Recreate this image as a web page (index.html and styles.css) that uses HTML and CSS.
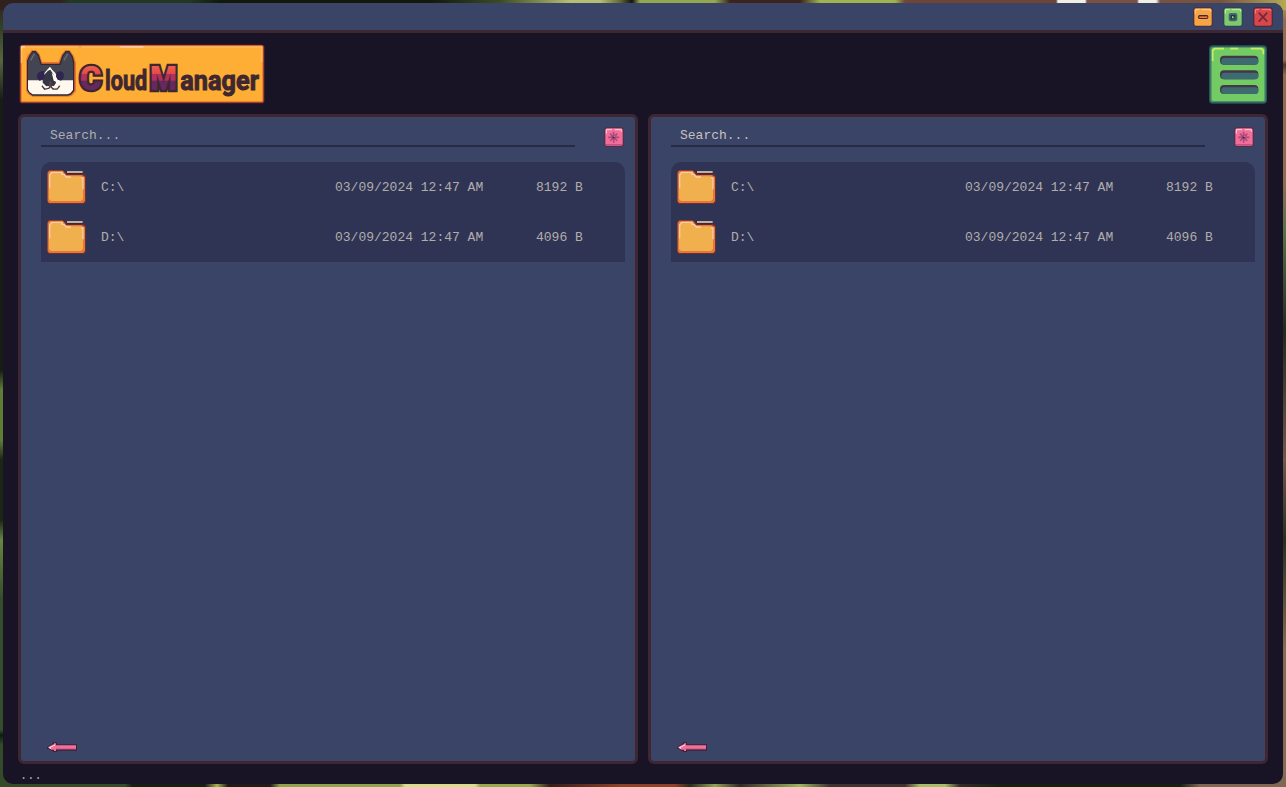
FILE: index.html
```html
<!DOCTYPE html>
<html lang="en">
<head>
<meta charset="utf-8">
<title>CloudManager</title>
<link rel="stylesheet" href="styles.css">
</head>
<body>
<svg class="defs" width="0" height="0" aria-hidden="true">
  <defs>
    <linearGradient id="letter" gradientUnits="userSpaceOnUse" x1="0" y1="82" x2="0" y2="155">
      <stop offset="0" stop-color="#f0614b"/><stop offset=".36" stop-color="#e4484b"/>
      <stop offset=".37" stop-color="#b4305c"/><stop offset=".62" stop-color="#b4305c"/>
      <stop offset=".63" stop-color="#66285f"/><stop offset="1" stop-color="#66285f"/>
    </linearGradient>
    <symbol id="folder" viewBox="0 0 117 102">
      <path d="M6 0H45L54 6H105V12H111L117 18V96L111 102H6L0 96V6Z" fill="#6a3034"/>
      <path d="M54 3H107V13H62Z" fill="#3e2731"/>
      <path d="M6 2H48L57 15H105L114 21V93L109 99H6L2 93V9Z" fill="#e87638"/>
      <path d="M12 6H45L57 19H102L108 25V87L102 93H12L6 87V13Z" fill="#f0b04e"/>
      <path d="M8 55V15L14 7H45V13H51L58 21H72M102 24H108V58" fill="none" stroke="#f8cfaa" stroke-width="4"/>
      <path d="M60 6H107" stroke="#f2dccb" stroke-width="4"/>
    </symbol>
    <symbol id="star" viewBox="0 0 60 60">
      <rect x="1" y="1" width="58" height="58" rx="8" fill="#5a2944"/>
      <rect x="4" y="4" width="52" height="52" rx="5" fill="#f0709a"/>
      <path d="M5 53H55" stroke="#c95080" stroke-width="4"/>
      <path d="M7 20V8H24M32 8H52V14" fill="none" stroke="#fbd5df" stroke-width="3"/>
      <path d="M29 14V48M12 31H46M18 20L40 42M40 20L18 42" stroke="#b34b7f" stroke-width="5"/>
      <path d="M21 23H37V39H21Z" fill="#b34b7f"/>
      <path d="M26 28H32V34H26Z" fill="#3e2031"/><path d="M29 27H32V30H29Z" fill="#e5a8ae"/>
    </symbol>
    <symbol id="back" viewBox="0 0 90 33">
      <path d="M0 14H3V11H9V8H15V4H18V1H30V7H90V26H30V30H18V27H12V23H6V20H0Z" fill="#3e2138"/>
      <path d="M3 14H9V11H15V8H21V4H27V10H87V22H27V27H21V23H12V20H6V17H3Z" fill="#f0709a"/>
      <path d="M27 20H87" stroke="#dc5d89" stroke-width="3"/>
      <path d="M6 14H12V11H18V8H24V11H18V14H12V20H9V17H6Z" fill="#ffe7ec"/>
    </symbol>
  </defs>
</svg>
<div class="window">
  <header class="titlebar">
    <svg class="control" viewBox="0 0 60 60">
      <rect x="1" y="1" width="58" height="58" rx="8" fill="#542b38"/><rect x="4" y="4" width="52" height="52" rx="5" fill="#f7a544"/>
      <path d="M7 20V8H20M26 8H53V14" fill="none" stroke="#ffd09a" stroke-width="3"/>
      <rect x="15" y="24" width="31" height="12" rx="5" fill="#3e2731"/><rect x="19" y="28" width="24" height="5" fill="#ee7a3b"/>
    </svg>
    <svg class="control" viewBox="0 0 60 60">
      <rect x="1" y="1" width="58" height="58" rx="8" fill="#29454d"/><rect x="4" y="4" width="52" height="52" rx="5" fill="#80c96c"/>
      <path d="M7 20V8H20M26 8H53V14" fill="none" stroke="#cdf09a" stroke-width="3"/>
      <rect x="17" y="18" width="26" height="25" rx="6" fill="#3e6872"/><rect x="23" y="24" width="14" height="13" fill="#27323d"/><path d="M27 27H31V31H34V34H27Z" fill="#80c96c"/>
    </svg>
    <svg class="control" viewBox="0 0 60 60">
      <rect x="1" y="1" width="58" height="58" rx="8" fill="#542035"/><rect x="4" y="4" width="52" height="52" rx="5" fill="#d84749"/>
      <path d="M7 20V8H18M26 8H53V12" fill="none" stroke="#ef8580" stroke-width="3"/>
      <path d="M17 17L43 44M43 17L17 44" fill="none" stroke="#702a3b" stroke-width="5"/>
    </svg>
  </header>
  <div class="brandbar">
    <svg class="logo" viewBox="12 18 738 180">
      <rect x="14" y="20" width="734" height="176" rx="8" fill="#7e3034"/>
      <rect x="17" y="22" width="728" height="171" rx="5" fill="#ee6d2d"/>
      <rect x="20" y="25" width="722" height="165" rx="3" fill="#feae34"/>
      <path d="M20 75V27H190M200 27H740V72" fill="none" stroke="#fdb95d" stroke-width="5"/>
      <path d="M20 36V27H30M315 27H385" fill="none" stroke="#f8ceb0" stroke-width="4"/>
      <path d="M33 66L38 52L50 36H63L74 48L82 72H130L140 48L151 36H164L177 54L183 75V160L171 173L160 176H52L39 168L33 158Z" fill="#ee722d"/>
      <path d="M36 68L42 54L52 39H62L72 51L80 77H133L142 52L152 39H163L173 54L178 72V158L168 170L158 173H52L42 166L36 156Z" fill="#2d2737"/>
      <path d="M39 70L45 55L54 43H60L69 54L77 81H136L145 55L154 43H161L170 57L174 74V128H39Z" fill="#434552"/>
      <path d="M47 67L58 48M147 67L158 48" stroke="#6a6c77" stroke-width="4"/>
      <path d="M39 127H77L88 106L98 94L105 86L112 96L121 105L127 119L137 127H174V156L166 166L157 169H53L44 163L39 154Z" fill="#fff8ee"/>
      <path d="M87 111L99 98L106 95L112 104L119 116L123 135L116 145H94L83 134V116Z" fill="#343643"/>
      <path d="M110 104L121 116L126 132L116 128Z" fill="#fff8ee"/>
      <path d="M66 109L74 101L87 98L89 116L83 126L73 128L66 119ZM125 103L137 99L146 106V119L138 128L128 125L123 116Z" fill="#302451"/>
      <path d="M81 143L89 153L102 150L107 144L114 153H126L134 143" fill="none" stroke="#493d49" stroke-width="5"/>
      <path d="M85 142L92 149L101 146M112 145L118 149H125L130 142" fill="none" stroke="#fff8ee" stroke-width="4"/>
      <path d="M103 130H109V147H103Z" fill="#60424b"/>
      <text class="wordmark" y="155"><tspan class="capital" x="194" textLength="65" lengthAdjust="spacingAndGlyphs">C</tspan><tspan class="small" x="270" textLength="127" lengthAdjust="spacingAndGlyphs">loud</tspan><tspan class="capital" x="405" textLength="81" lengthAdjust="spacingAndGlyphs">M</tspan><tspan class="small" x="496" textLength="236" lengthAdjust="spacingAndGlyphs">anager</tspan></text>
    </svg>
    <svg class="menu" viewBox="0 0 180 180">
      <rect x="3" y="1" width="174" height="175" rx="11" fill="#27565b"/>
      <rect x="7" y="5" width="166" height="167" rx="8" fill="#4b8b69"/>
      <rect x="11" y="8" width="158" height="160" rx="5" fill="#72cb63"/>
      <path d="M14 48V17L20 11H48M67 11H90M128 11H160L166 17V28" fill="none" stroke="#c4f062" stroke-width="5"/>
      <g fill="#453744"><rect x="36" y="32" width="115" height="27" rx="12"/><rect x="36" y="76" width="115" height="27" rx="12"/><rect x="36" y="120" width="115" height="27" rx="12"/></g>
      <g fill="#3e6b72"><rect x="40" y="39" width="111" height="20" rx="9"/><rect x="40" y="83" width="111" height="20" rx="9"/><rect x="40" y="127" width="111" height="20" rx="9"/></g>
    </svg>
  </div>
  <main class="panels">
    <section class="panel">
      <div class="search"><div class="field">Search...</div><svg class="star"><use href="#star"/></svg></div>
      <div class="list">
        <div class="row"><svg class="folder"><use href="#folder"/></svg><span>C:\</span><span>03/09/2024 12:47 AM</span><span>8192 B</span></div>
        <div class="row"><svg class="folder"><use href="#folder"/></svg><span>D:\</span><span>03/09/2024 12:47 AM</span><span>4096 B</span></div>
      </div>
      <svg class="back"><use href="#back"/></svg>
    </section>
    <section class="panel">
      <div class="search"><div class="field active">Search...</div><svg class="star"><use href="#star"/></svg></div>
      <div class="list">
        <div class="row"><svg class="folder"><use href="#folder"/></svg><span>C:\</span><span>03/09/2024 12:47 AM</span><span>8192 B</span></div>
        <div class="row"><svg class="folder"><use href="#folder"/></svg><span>D:\</span><span>03/09/2024 12:47 AM</span><span>4096 B</span></div>
      </div>
      <svg class="back"><use href="#back"/></svg>
    </section>
  </main>
  <footer class="status">...</footer>
</div>
</body>
</html>
```

FILE: styles.css
```css
* { box-sizing: border-box; }
body {
  margin: 0;
  padding: 3px;
  height: 787px;
  overflow: hidden;
  font: 13px/16px "Liberation Mono", monospace;
  color: #b0adac;
  background:
    linear-gradient(90deg, #30211f 0 60px, #233820 70px 190px, #11190d 220px 430px, #3c4b24 500px, #b6bd74 570px 600px, #626a34 620px, #15130f 632px, #91a850 640px 715px, #3c241c 730px 800px, #9fb34f 820px 895px, #6d4638 905px 1056px, #f1eee6 1058px 1085px, #795241 1087px 1137px, #f1eee6 1139px 1156px, #78523e 1160px 1220px, #b2aa55 1286px) top / 100% 10px no-repeat,
    linear-gradient(90deg, #344b2a 0 125px, #152014 132px 205px, #a2b64e 217px, #201b16 228px 270px, #8fa54a 280px 400px, #d7dc8e 405px 475px, #95aa4b 480px 530px, #32201b 550px, #8c4224 620px 675px, #24301b 690px, #8fa554 715px, #302b25 740px, #9ab85c 800px, #3d342f 830px 905px, #a5bf68 920px 945px, #302d26 960px, #142012 1000px 1180px, #7c6853 1200px) bottom / 100% 10px no-repeat,
    linear-gradient(#30211c 0, #334426 30px, #56663b 60px, #171d12 100px 370px, #5e7e36 390px 440px, #1b2615 460px 520px, #678442 540px, #344d2a 600px 730px, #121a10 735px, #344b2a 745px) left / 10px 100% no-repeat,
    linear-gradient(#b2aa55 0, #8d6c54 20px 60px, #49362b 65px, #8d6c54 75px 180px, #57724a 230px, #222b1c 330px, #6c5947 460px, #283019 540px, #806d55 650px) right / 10px 100% no-repeat;
}
.defs { position: absolute; }
.window {
  height: 781px;
  display: flex;
  flex-direction: column;
  border-radius: 10px;
  overflow: hidden;
  background: #181425;
}
.titlebar {
  height: 30px;
  flex: none;
  display: flex;
  justify-content: flex-end;
  gap: 10px;
  padding: 4px 10px 0 0;
  background: #3a4466;
  border-bottom: 3px solid #3e2731;
}
.control { width: 20px; height: 20px; }
.brandbar {
  height: 81px;
  flex: none;
  display: flex;
  justify-content: space-between;
  align-items: flex-start;
  padding: 11px 15px 0 16px;
}
.logo { width: 246px; height: 60px; }
.menu { width: 60px; height: 60px; margin-top: 1px; }
.wordmark {
  font-family: Roboto, sans-serif;
  font-weight: 700;
  stroke: #3e2731;
  paint-order: stroke;
}
.small { font-size: 84px; fill: #3e2731; stroke-width: 3px; }
.capital {
  font-size: 98px;
  font-weight: 900;
  fill: url(#letter);
  stroke-width: 14px;
}
.panels {
  height: 650px;
  flex: none;
  display: grid;
  grid-template-columns: 620px 620px;
  gap: 10px;
  padding: 0 15px;
}
.panel {
  display: flex;
  flex-direction: column;
  padding: 9px 10px 8px 20px;
  border: 3px solid #3e2731;
  border-radius: 6px;
  background: #3a4466;
}
.search { display: flex; justify-content: space-between; padding-right: 1px; }
.field {
  width: 534px;
  height: 21px;
  padding: 2px 9px 0;
  border-bottom: 2px solid #262b44;
}
.field.active { color: #c6c2bd; }
.star { width: 20px; height: 20px; margin-top: 1px; }
.list {
  margin-top: 15px;
  background: #303454;
  border-radius: 10px 10px 0 0;
}
.row {
  height: 50px;
  display: grid;
  grid-template-columns: 54px 234px 201px 1fr;
  align-items: center;
  padding-left: 6px;
}
.row span { padding-top: 2px; }
.folder { width: 39px; height: 34px; margin-bottom: 1px; }
.back { width: 30px; height: 11px; margin: auto 0 0 6px; }
.status { padding: 4px 17px 0; font-size: 12px; }
```
